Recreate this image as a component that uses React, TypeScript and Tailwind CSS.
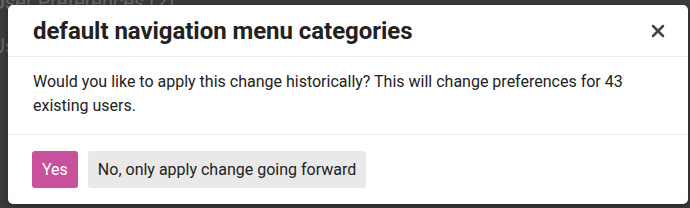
import { X } from 'lucide-react';

export default function App() {
  return (
    <div className="relative w-[690px] h-[208px] overflow-hidden bg-[#3c3c3c] font-['Roboto',sans-serif]">
      {/* page behind the overlay */}
      <div className="text-[#6a6a6a] text-[20px] leading-none -mt-[8px] -ml-[8px]">User Preferences (2)</div>
      <div className="text-[#6a6a6a] text-[20px] leading-none mt-[24px] -ml-[8px]">Us</div>

      <div className="absolute left-[8px] top-[5px] w-[680px] h-[199px] bg-white rounded-[5px] shadow-[0_2px_8px_rgba(0,0,0,0.4)] flex flex-col">
        <div className="flex items-center justify-between h-[52px] pl-[25px] pr-[20px] border-b border-[#ececec]">
          <h2 className="text-[24px] font-bold text-[#222] tracking-[-0.05px]">default navigation menu categories</h2>
          <X className="w-[20px] h-[20px] text-[#444]" strokeWidth={3} />
        </div>
        <div className="h-[78px] pl-[25px] pr-[20px] pt-[13px] border-b border-[#ececec] text-[16px] leading-[24px] text-[#222]">
          Would you like to apply this change historically? This will change preferences for 43 existing users.
        </div>
        <div className="flex items-start gap-[10px] pl-[24px] pt-[16px]">
          <button className="h-[37px] px-[10px] rounded-[3px] bg-[#c8509c] text-white text-[16px]">Yes</button>
          <button className="h-[37px] px-[10px] rounded-[3px] bg-[#e9e9e9] text-[#222] text-[16px]">No, only apply change going forward</button>
        </div>
      </div>
    </div>
  );
}
